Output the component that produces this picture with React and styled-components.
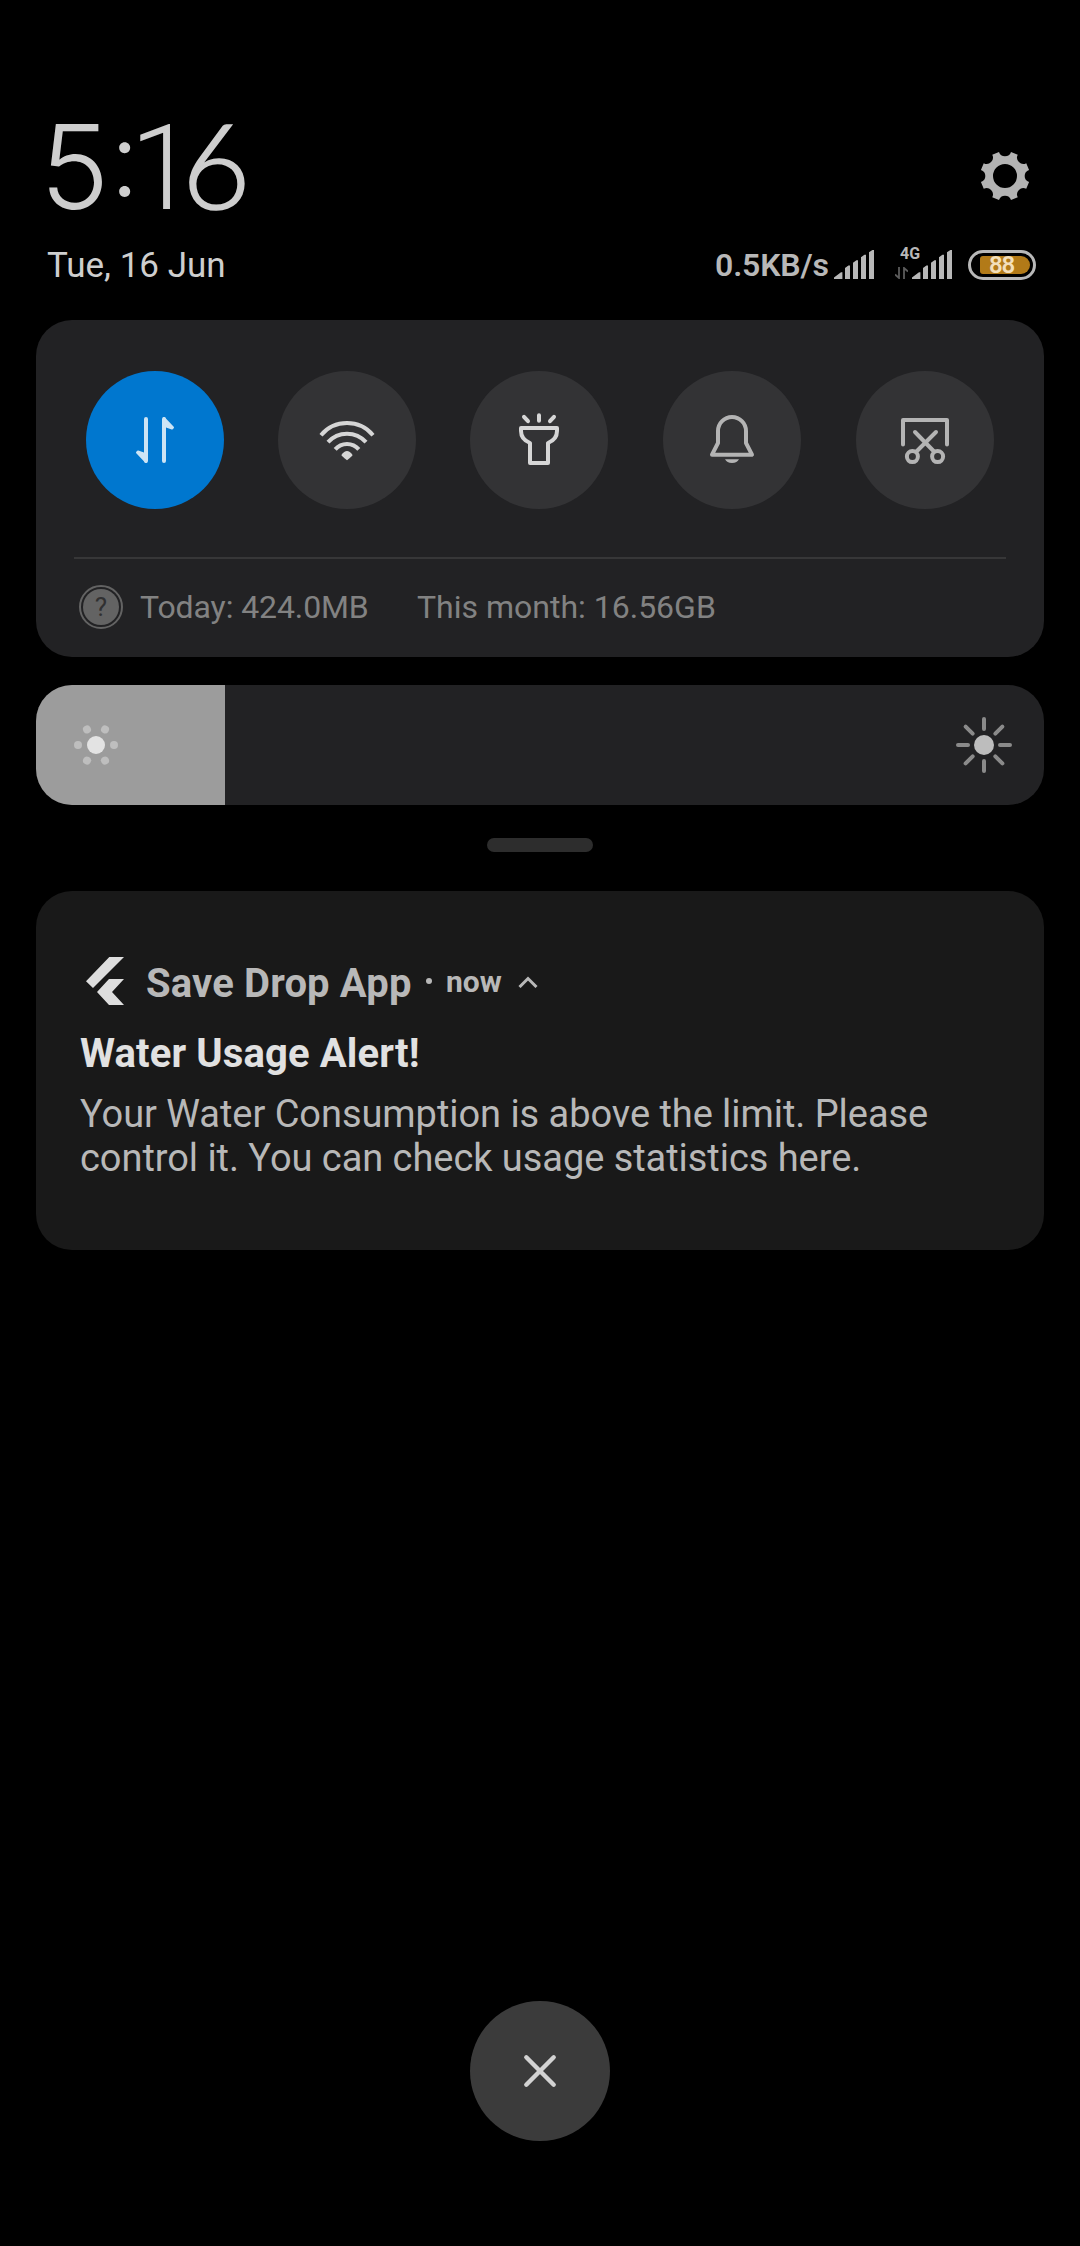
import React from "react";
import styled, { createGlobalStyle } from "styled-components";

const GlobalStyle = createGlobalStyle`
  * { box-sizing: border-box; }
  html, body { margin: 0; background: #000; }
  svg { display: block; flex: none; }
`;

const Shade = styled.div`
  width: 1080px;
  height: 2246px;
  padding: 110px 36px 0;
  background: #000;
  color: #cecece;
  font-family: Roboto, "Liberation Sans", sans-serif;
  display: flex;
  flex-direction: column;
  overflow: hidden;
`;

const ClockRow = styled.header`
  height: 130px;
  padding: 0 14px 0 4px;
  display: flex;
  justify-content: space-between;
`;

const Clock = styled.div`
  height: 126px;
  margin-top: -6px;
  display: flex;
  align-items: baseline;
  line-height: 120px;
  font-weight: 300;
  white-space: nowrap;
`;

const Digit = styled.span`
  width: ${(p) => p.$width}px;
  font-family: ${(p) => p.$face}, sans-serif;
  font-size: ${(p) => p.$size || 118}px;
  letter-spacing: -4px;
  -webkit-text-stroke: ${(p) => p.$stroke || 0}px #cecece;
`;

const Colon = styled.span`
  width: 20px;
  position: relative;
  top: -13px;
  font-family: Inter, sans-serif;
  font-size: 104px;
  letter-spacing: -6px;
`;

const SettingsButton = styled.div`
  padding-top: 41px;
`;

const StatusRow = styled.div`
  height: 50px;
  padding: 0 8px 0 11px;
  display: flex;
  align-items: center;
  justify-content: space-between;
`;

const DateText = styled.div`
  font-size: 35px;
  line-height: 50px;
  padding-top: 2px;
  white-space: nowrap;
`;

const StatusIcons = styled.div`
  display: flex;
  align-items: center;
  height: 50px;
  color: #b8b8b8;
`;

const Speed = styled.div`
  width: 119px;
  font-size: 32px;
  font-weight: 600;
  line-height: 50px;
  letter-spacing: -0.15px;
  white-space: nowrap;
`;

const Mobile = styled.div`
  display: flex;
  position: relative;
  margin-left: 21px;
`;

const NetworkType = styled.span`
  position: absolute;
  left: 5px;
  top: -4px;
  font-size: 16px;
  font-weight: 700;
  line-height: 16px;
`;

const ActivityArrows = styled.div`
  padding-top: 17px;
  margin-right: 4px;
`;

const Battery = styled.div`
  width: 68px;
  height: 30px;
  margin-left: 16px;
  border: 3px solid #b8b8b8;
  border-radius: 15px;
  padding: 3px 3px 3px 9px;
`;

const BatteryLevel = styled.div`
  width: 50px;
  height: 18px;
  border-radius: 3px 9px 9px 3px;
  background: #b27a18;
  color: #f3dfba;
  font-size: 24px;
  font-weight: 600;
  line-height: 19px;
  letter-spacing: -1.2px;
  text-align: center;
  padding-right: 7px;
`;

const QuickPanel = styled.section`
  margin-top: 30px;
  height: 337px;
  border-radius: 36px;
  background: #222224;
  padding: 51px 38px 0;
`;

const Toggles = styled.div`
  display: grid;
  grid-template-columns: 192px 192px 193px 193px 138px;
  padding: 0 12px;
`;

const Toggle = styled.div`
  width: 138px;
  height: 138px;
  border-radius: 50%;
  background: ${(p) => (p.$on ? "#0077cf" : "#333335")};
  color: ${(p) => p.$tint};
`;

const Usage = styled.div`
  margin-top: 48px;
  border-top: 2px solid #373738;
  padding: 26px 0 0 5px;
  display: flex;
  align-items: flex-start;
  color: #828282;
  font-size: 32px;
  line-height: 45px;
  white-space: nowrap;
`;

const HelpBadge = styled.div`
  width: 44px;
  height: 44px;
  border: 2px solid #636363;
  border-radius: 50%;
  padding: 2px;
  margin-right: 17px;
`;

const HelpMark = styled.div`
  height: 36px;
  border-radius: 50%;
  background: #636363;
  color: #303031;
  font-size: 26px;
  line-height: 37px;
  text-align: center;
`;

const Today = styled.span`
  width: 277px;
  letter-spacing: -0.1px;
`;

const Brightness = styled.section`
  margin-top: 28px;
  height: 120px;
  border-radius: 36px;
  background: #222224;
  overflow: hidden;
  display: flex;
  align-items: center;
  justify-content: space-between;
  padding-right: 30px;
`;

const BrightnessFill = styled.div`
  width: 189px;
  height: 120px;
  background: #9c9c9c;
  display: flex;
  align-items: center;
  padding-left: 38px;
`;

const Handle = styled.div`
  width: 106px;
  height: 14px;
  border-radius: 7px;
  margin: 33px auto 0;
  background: #2d2d2d;
`;

const Notification = styled.article`
  margin-top: 39px;
  height: 359px;
  border-radius: 36px;
  background: #191919;
  padding: 66px 44px 0;
`;

const AppLine = styled.div`
  height: 48px;
  padding-left: 6px;
  display: flex;
  align-items: center;
  color: #b8b8b8;
  font-weight: 700;
  white-space: nowrap;
`;

const AppName = styled.span`
  width: 280px;
  margin-left: 22px;
  font-size: 40px;
  line-height: 48px;
  letter-spacing: 0.15px;
  padding-top: 6px;
`;

const Separator = styled.span`
  width: 6px;
  height: 6px;
  border-radius: 50%;
  background: #b8b8b8;
  margin-right: 14px;
`;

const When = styled.span`
  width: 72px;
  font-size: 30px;
  line-height: 48px;
  padding-top: 2px;
`;

const Title = styled.h1`
  margin: 24px 0 0;
  color: #e1e1e1;
  font-size: 40px;
  line-height: 50px;
  letter-spacing: 0.13px;
  font-weight: 700;
  white-space: nowrap;
`;

const Message = styled.p`
  margin: 13px 0 0;
  color: #b8b8b8;
  font-size: 38px;
  line-height: 44px;
  letter-spacing: -0.05px;
  white-space: nowrap;
`;

const ClearButton = styled.div`
  width: 140px;
  height: 140px;
  border-radius: 50%;
  margin: 751px auto 0;
  background: #3b3b3b;
`;

const gearPath = () => {
  const pt = (deg, r) => {
    const a = (deg * Math.PI) / 180;
    return `${(25 + r * Math.cos(a)).toFixed(2)} ${(25 + r * Math.sin(a)).toFixed(2)}`;
  };
  let d = "";
  for (let k = 0; k < 8; k++) {
    const c = 22.5 + 45 * k;
    d += `${k ? "L" : "M"}${pt(c - 8.5, 24.8)}L${pt(c + 8.5, 24.8)}A6.3 6.3 0 0 0 ${pt(c + 36.5, 24.8)}`;
  }
  return `${d}Z M37 25a12 12 0 1 0-24 0a12 12 0 1 0 24 0Z`;
};

const Gear = () => (
  <svg width="50" height="50" viewBox="0 0 50 50" fill="#b3b3b3">
    <path fillRule="evenodd" d={gearPath()} />
  </svg>
);

const Signal = () => (
  <svg width="40" height="30" viewBox="0 0 40 30" fill="currentColor">
    <path d="M0 29V27.5L7 22.2H8.4V29ZM11 29V18L14.4 15.6H16V29ZM19 29V12.8L22.4 10.3H24V29ZM27 29V7.2L30.4 4.8H32V29ZM35 29V2.2L38.4 0H40V29Z" />
  </svg>
);

const Icon = ({ children }) => (
  <svg
    width="138"
    height="138"
    viewBox="0 0 138 138"
    fill="none"
    stroke="currentColor"
    strokeWidth="4"
    strokeLinecap="round"
    strokeLinejoin="round"
  >
    {children}
  </svg>
);

const DataIcon = () => (
  <Icon>
    <path d="M60 48V90M78 48V90" />
    <path fill="currentColor" strokeWidth="2" d="M60 91L51 81.5L52 80.5L59 83ZM78 47L87 56.5L86 57.5L79 55Z" />
  </Icon>
);

const WifiIcon = () => (
  <Icon>
    <g strokeLinecap="butt">
      <path d="M43 64.2A34 34 0 0 1 95 64.2" />
      <path d="M50 71.2A25.5 25.5 0 0 1 88 71.2" />
      <path d="M57.2 78.4A15.5 15.5 0 0 1 80.8 78.4" />
    </g>
    <path fill="currentColor" stroke="none" d="M63.4 84Q69 76 74.6 84Q74 85.5 69 89.3Q64 85.5 63.4 84Z" />
  </Icon>
);

const TorchIcon = () => (
  <Icon>
    <path d="M69 44.3V49.7M54 45.8L58 50.2M84 45.8L80 50.2M51 57H87V60C87 66 83 70 78 72V92H60V72C55 70 51 66 51 60Z" />
  </Icon>
);

const BellIcon = () => (
  <Icon>
    <path d="M55 72V60A14 14 0 0 1 83 60V72L89 83.7H49Z" />
    <path fill="currentColor" stroke="none" d="M62 88.3H76A7.4 5.4 0 0 1 62 88.3Z" />
  </Icon>
);

const ScreenshotIcon = () => (
  <Icon>
    <path d="M47 73.5V49H91V73.5M59 61L78 80.5M80 61L60.5 80.5" />
    <circle cx="56.4" cy="85.6" r="5.5" />
    <circle cx="81.6" cy="85.6" r="5.5" />
  </Icon>
);

const DimIcon = () => (
  <svg width="44" height="44" viewBox="-22 -22 44 44" fill="#bebebe">
    <circle r="9" fill="#e3e3e3" />
    {[0, 60, 120, 180, 240, 300].map((a) => (
      <circle key={a} cx="18" r="4" transform={`rotate(${a})`} />
    ))}
  </svg>
);

const BrightIcon = () => (
  <svg width="60" height="60" viewBox="-30 -30 60 60" stroke="#8a8a8a" strokeWidth="4" strokeLinecap="round">
    <circle r="10" fill="#bdbdbd" stroke="none" />
    {[0, 45, 90, 135, 180, 225, 270, 315].map((a) => (
      <path key={a} d="M16 0H26" transform={`rotate(${a})`} />
    ))}
  </svg>
);

const toggles = [
  { name: "data", on: true, tint: "#cce4f5", Glyph: DataIcon },
  { name: "wifi", tint: "#d6d6d6", Glyph: WifiIcon },
  { name: "torch", tint: "#d6d6d6", Glyph: TorchIcon },
  { name: "bell", tint: "#b4b4b4", Glyph: BellIcon },
  { name: "screenshot", tint: "#b4b4b4", Glyph: ScreenshotIcon },
];

export default function App() {
  return (
    <Shade>
      <GlobalStyle />
      <ClockRow>
        <Clock>
          <Digit $face="Inter" $width={70} $size={117}>5</Digit>
          <Colon>:</Colon>
          <Digit $face="Roboto" $width={52} $size={118}>1</Digit>
          <Digit $face="Lato" $width={68} $stroke={1.7}>6</Digit>
        </Clock>
        <SettingsButton>
          <Gear />
        </SettingsButton>
      </ClockRow>
      <StatusRow>
        <DateText>Tue, 16 Jun</DateText>
        <StatusIcons>
          <Speed>0.5KB/s</Speed>
          <Signal />
          <Mobile>
            <NetworkType>4G</NetworkType>
            <ActivityArrows>
              <svg width="13" height="12" viewBox="0 0 13 12" fill="none" stroke="#5c5c5c" strokeWidth="1.8">
                <path d="M4 0V11L0 7.5M9 12V1L13 4.5" />
              </svg>
            </ActivityArrows>
            <Signal />
          </Mobile>
          <Battery>
            <BatteryLevel>88</BatteryLevel>
          </Battery>
        </StatusIcons>
      </StatusRow>
      <QuickPanel>
        <Toggles>
          {toggles.map(({ name, on, tint, Glyph }) => (
            <Toggle key={name} $on={on} $tint={tint}>
              <Glyph />
            </Toggle>
          ))}
        </Toggles>
        <Usage>
          <HelpBadge>
            <HelpMark>?</HelpMark>
          </HelpBadge>
          <Today>Today: 424.0MB</Today>
          <span>This month: 16.56GB</span>
        </Usage>
      </QuickPanel>
      <Brightness>
        <BrightnessFill>
          <DimIcon />
        </BrightnessFill>
        <BrightIcon />
      </Brightness>
      <Handle />
      <Notification>
        <AppLine>
          <svg width="38" height="48" viewBox="0 0 38 48" fill="#dedede">
            <path d="M23.3 0H38L7 31L0 24.2ZM23 22H38L26 35L38 48H23L11 35Z" />
          </svg>
          <AppName>Save Drop App</AppName>
          <Separator />
          <When>now</When>
          <svg width="20" height="14" viewBox="0 0 20 14" fill="none" stroke="#b8b8b8" strokeWidth="3">
            <path d="M1.5 13L10 4.5L18.5 13" />
          </svg>
        </AppLine>
        <Title>Water Usage Alert!</Title>
        <Message>
          Your Water Consumption is above the limit. Please
          <br />
          control it. You can check usage statistics here.
        </Message>
      </Notification>
      <ClearButton>
        <svg width="140" height="140" viewBox="0 0 140 140" stroke="#d2d2d2" strokeWidth="4.4" strokeLinecap="round">
          <path d="M56.3 56.3L83.7 83.7M83.7 56.3L56.3 83.7" />
        </svg>
      </ClearButton>
    </Shade>
  );
}
